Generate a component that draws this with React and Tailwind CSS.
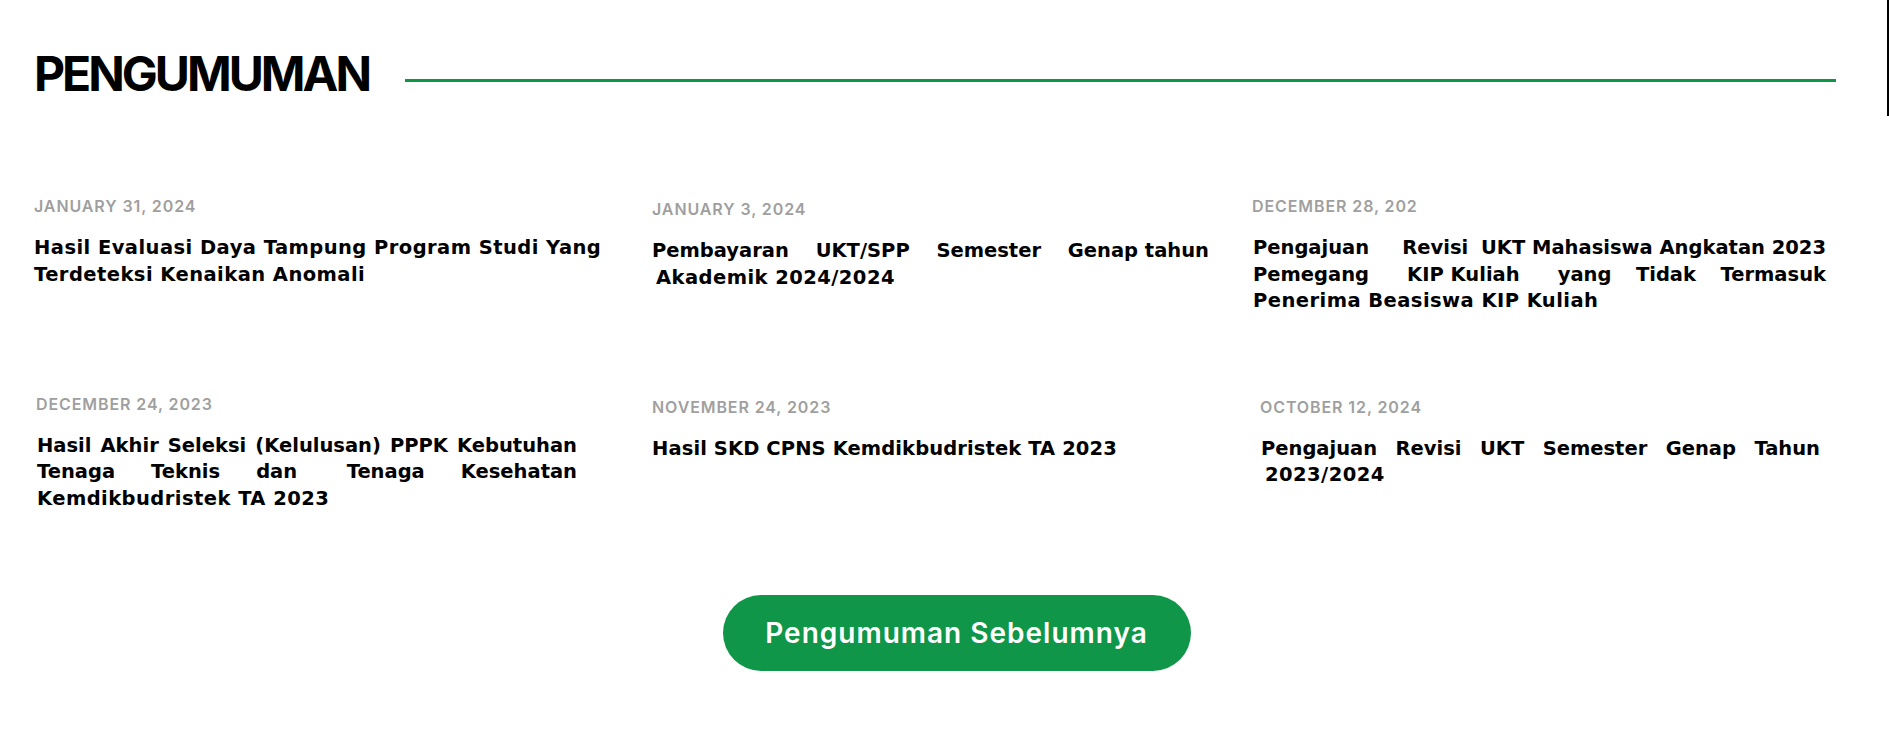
const announcements = [
  {
    date: 'JANUARY 31, 2024',
    cell: '',
    title: 'w-[600px]',
    lines: [
      { groups: ['Hasil Evaluasi Daya Tampung Program Studi Yang'] },
      { groups: ['Terdeteksi Kenaikan Anomali'] },
    ],
  },
  {
    date: 'JANUARY 3, 2024',
    cell: 'mt-[3px]',
    title: 'w-[557px]',
    lines: [
      { groups: ['Pembayaran', 'UKT/SPP', 'Semester', 'Genap tahun'], justify: true },
      { groups: ['Akademik 2024/2024'], indent: true },
    ],
  },
  {
    date: 'DECEMBER 28, 202',
    cell: '',
    title: 'w-[574px] pl-[1px]',
    lines: [
      { groups: ['Pengajuan\u00a0\u00a0\u00a0', 'Revisi', 'UKT Mahasiswa Angkatan 2023'], justify: true },
      { groups: ['Pemegang\u00a0\u00a0', 'KIP Kuliah\u00a0\u00a0', 'yang', 'Tidak', 'Termasuk'], justify: true },
      { groups: ['Penerima Beasiswa KIP Kuliah'] },
    ],
  },
  {
    date: 'DECEMBER 24, 2023',
    cell: 'pl-[2px]',
    title: 'w-[541px] pl-[1px]',
    lines: [
      { groups: ['Hasil', 'Akhir', 'Seleksi', '(Kelulusan)', 'PPPK', 'Kebutuhan'], justify: true },
      { groups: ['Tenaga', 'Teknis', 'dan\u00a0\u00a0', 'Tenaga', 'Kesehatan'], justify: true },
      { groups: ['Kemdikbudristek TA 2023'] },
    ],
  },
  {
    date: 'NOVEMBER 24, 2023',
    cell: 'mt-[3px]',
    title: 'w-[560px]',
    lines: [{ groups: ['Hasil SKD CPNS Kemdikbudristek TA 2023'], tight: true }],
  },
  {
    date: 'OCTOBER 12, 2024',
    cell: 'mt-[3px] pl-[8px]',
    title: 'w-[560px] pl-[1px]',
    lines: [
      { groups: ['Pengajuan', 'Revisi', 'UKT', 'Semester', 'Genap', 'Tahun'], justify: true },
      { groups: ['2023/2024'], indent: true },
    ],
  },
];

function TitleLine({ line }) {
  let align = 'tracking-[0.45px]';
  if (line.justify) align = 'text-justify [text-align-last:justify]';
  else if (line.tight) align = 'tracking-[0.1px]';

  return (
    <span className={`block whitespace-nowrap ${align} ${line.indent ? 'pl-[4px]' : ''}`}>
      {line.groups.map((g, i) => (
        <span key={i}>
          {i > 0 && ' '}
          <span className="inline-block">{g}</span>
        </span>
      ))}
    </span>
  );
}

function AnnouncementCard({ item }) {
  return (
    <div className={item.cell}>
      <p className="font-[Inter,sans-serif] text-[16px] leading-[24px] font-semibold tracking-[0.9px] text-[#9f9f9f]">
        {item.date}
      </p>
      <h3
        className={`mt-[17px] font-['DejaVu_Sans',sans-serif] text-[19.5px] leading-[26.5px] font-bold text-black ${item.title}`}
      >
        {item.lines.map((line, i) => (
          <TitleLine key={i} line={line} />
        ))}
      </h3>
    </div>
  );
}

export default function App() {
  return (
    <div className="relative min-h-screen bg-white font-[Inter,'Liberation_Sans',sans-serif]">
      {/* scrollbar edge */}
      <div className="absolute right-0 top-0 h-[116px] w-[2px] bg-black" />

      <header className="flex items-center pl-[34px] pt-[50px]">
        <h2 className="text-[48px] leading-none font-bold tracking-[-3px] text-black">PENGUMUMAN</h2>
        <div className="ml-[36px] mt-[13px] h-[3px] w-[1431px] bg-[#0e9547]" />
      </header>

      <div className="mt-[96px] grid grid-cols-[618px_600px_583px] items-start gap-y-[77px] pl-[34px]">
        {announcements.map((item, i) => (
          <AnnouncementCard key={i} item={item} />
        ))}
      </div>

      <div className="mt-[83px] flex justify-center pl-[24px]">
        <button className="h-[76px] w-[468px] rounded-full bg-[#0f9649] text-[28px] font-semibold tracking-[1px] text-white">
          Pengumuman Sebelumnya
        </button>
      </div>
    </div>
  );
}
